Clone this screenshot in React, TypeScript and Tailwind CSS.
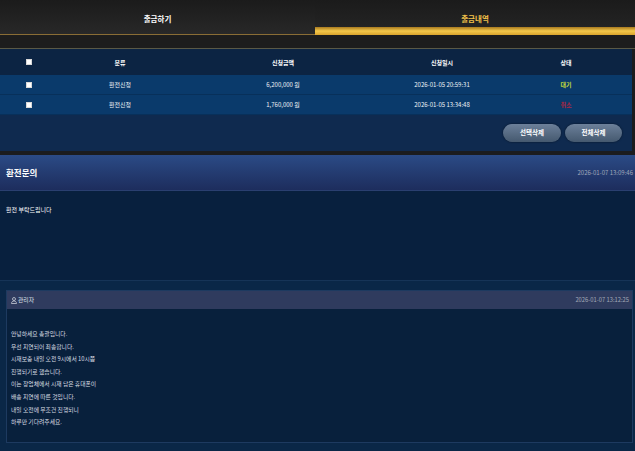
import React from "react";

const font = { fontFamily: '"Noto Sans CJK KR", "Noto Sans", sans-serif' };

const Check = () => (
  <div className="w-[6px] h-[6px] bg-white border border-[#d8d8d8]" />
);

const rows = [
  { type: "환전신청", amount: "6,200,000 원", date: "2026-01-05 20:59:31", status: "대기", color: "text-[#c2dc3c]" },
  { type: "환전신청", amount: "1,760,000 원", date: "2026-01-05 13:34:48", status: "취소", color: "text-[#b3253f]" },
];

const lines = [
  "안녕하세요 총괄입니다.",
  "우선 지연되어 죄송합니다.",
  "시재보충 내일 오전 9시에서 10시쯤",
  "진행되기로 했습니다.",
  "이는 장업체에서 시재 담은 휴대폰이",
  "배송 지연에 따른 것입니다.",
  "내일 오전에 무조건 진행되니",
  "하루만 기다려주세요.",
];

const cols = "grid grid-cols-[58px_124px_202px_116px_132px]";

export default function App() {
  return (
    <div className="w-[635px] h-[451px] overflow-hidden bg-[#0a2747]" style={font}>
      {/* Tabs */}
      <div className="flex h-[35px]">
        <div className="w-[315px] flex justify-center pt-[14px] bg-gradient-to-b from-[#1b1b1b] to-[#282828] border-b border-[#8a6d35] text-white font-bold text-[7.5px] leading-[10px]">
          출금하기
        </div>
        <div className="flex-1 flex flex-col bg-gradient-to-b from-[#1b1b1b] to-[#262626]">
          <div className="flex-1 flex justify-center pt-[14px] text-[#f2c24a] font-bold text-[7.5px] leading-[10px]">
            출금내역
          </div>
          <div className="h-[8px] bg-gradient-to-b from-[#a87a20] via-[#f4c84a] to-[#d9a32c]" />
        </div>
      </div>
      <div className="h-[14px] bg-[#1d1d1d] border-b border-[#5a5946]" />

      {/* Table section */}
      <div className="bg-[#1b1c1e] pb-[4px]">
        <div className="w-[632px] bg-[#0f2a4f]">
          <div className={`${cols} h-[26px] items-center bg-[#0c2443] text-white font-bold text-[6px]`}>
            <div className="flex justify-center"><Check /></div>
            <div className="text-center">분류</div>
            <div className="text-center">신청금액</div>
            <div className="text-center">신청일시</div>
            <div className="text-center">상태</div>
          </div>
          {rows.map((r, i) => (
            <div
              key={i}
              className={`${cols} h-[20px] items-center bg-[#0a3a6b] border-b border-[#08305a] text-[#eef2f6] text-[6px]`}
            >
              <div className="flex justify-center"><Check /></div>
              <div className="text-center">{r.type}</div>
              <div className="text-center">{r.amount}</div>
              <div className="text-center">{r.date}</div>
              <div className={`text-center font-bold ${r.color}`}>{r.status}</div>
            </div>
          ))}
          <div className="h-[36px] flex justify-end items-start pt-[9px] pr-[10px] gap-[4px]">
            <button className="w-[58px] h-[18px] rounded-full bg-gradient-to-b from-[#6c809a] to-[#45596f] text-white font-bold text-[6.5px] shadow-[0_0_2px_rgba(0,0,0,0.6)]">
              선택삭제
            </button>
            <button className="w-[57px] h-[18px] rounded-full bg-gradient-to-b from-[#6c809a] to-[#45596f] text-white font-bold text-[6.5px] shadow-[0_0_2px_rgba(0,0,0,0.6)]">
              전체삭제
            </button>
          </div>
        </div>
      </div>

      {/* Inquiry header */}
      <div className="h-[36px] flex items-center justify-between pl-[6px] pr-[2px] bg-gradient-to-b from-[#2b4b86] to-[#1d2d5d] border-b border-[#2a3f70]">
        <div className="text-white font-bold text-[8.5px]">환전문의</div>
        <div className="text-[#a0a8ba] text-[6px]">2026-01-07 13:09:46</div>
      </div>
      <div className="h-[89px] bg-[#08203e] pl-[6px] pt-[15px] text-white text-[6px] leading-[8px]">
        환전 부탁드립니다
      </div>

      {/* Reply */}
      <div className="border-t border-[#163457] pt-[9px] pl-[6px] pr-[2px]">
        <div className="border border-[#1d3a60] bg-[#08203c]">
          <div className="h-[18px] flex items-center justify-between pl-[4px] pr-[3px] bg-[#2f3b5e] text-[#dde1e8] text-[5.8px]">
            <div className="flex items-center gap-[1px]">
              <svg width="6" height="7" viewBox="0 0 12 14" fill="none" stroke="#dde1e8" strokeWidth="1.4">
                <circle cx="6" cy="4" r="3" />
                <path d="M1 13c0-3 2.2-5 5-5s5 2 5 5z" />
              </svg>
              <span>관리자</span>
            </div>
            <div className="text-[#a3aab8]">2026-01-07 13:12:25</div>
          </div>
          <div className="h-[133px] pt-[19px] pl-[4px] text-[#dadde3] text-[5.8px] leading-[12.6px]">
            {lines.map((l, i) => (
              <div key={i}>{l}</div>
            ))}
          </div>
        </div>
      </div>
    </div>
  );
}
